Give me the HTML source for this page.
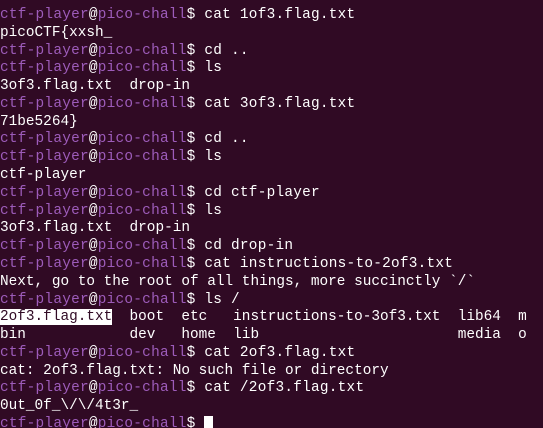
<!DOCTYPE html>
<html><head><style>
html,body{margin:0;padding:0;background:#300a24;width:543px;height:428px;overflow:hidden}
pre{margin:0;padding:7px 0 0 0;font-family:"Liberation Mono",monospace;font-size:14.4px;line-height:17.78px;color:#ffffff;white-space:pre}
.l{letter-spacing:0.25px}
.p{color:#9d5cba}
.h{background:#ffffff;color:#300a24}
.c{background:#ffffff}
</style></head><body><pre><span class="l"><span class="p">ctf-player</span>@<span class="p">pico-chall</span>$ cat 1of3.flag.txt</span>
picoCTF{xxsh_
<span class="l"><span class="p">ctf-player</span>@<span class="p">pico-chall</span>$ cd ..</span>
<span class="l"><span class="p">ctf-player</span>@<span class="p">pico-chall</span>$ ls</span>
3of3.flag.txt  drop-in
<span class="l"><span class="p">ctf-player</span>@<span class="p">pico-chall</span>$ cat 3of3.flag.txt</span>
71be5264}
<span class="l"><span class="p">ctf-player</span>@<span class="p">pico-chall</span>$ cd ..</span>
<span class="l"><span class="p">ctf-player</span>@<span class="p">pico-chall</span>$ ls</span>
ctf-player
<span class="l"><span class="p">ctf-player</span>@<span class="p">pico-chall</span>$ cd ctf-player</span>
<span class="l"><span class="p">ctf-player</span>@<span class="p">pico-chall</span>$ ls</span>
3of3.flag.txt  drop-in
<span class="l"><span class="p">ctf-player</span>@<span class="p">pico-chall</span>$ cd drop-in</span>
<span class="l"><span class="p">ctf-player</span>@<span class="p">pico-chall</span>$ cat instructions-to-2of3.txt</span>
Next, go to the root of all things, more succinctly `/`
<span class="l"><span class="p">ctf-player</span>@<span class="p">pico-chall</span>$ ls /</span>
<span class="h">2of3.flag.txt</span>  boot  etc   instructions-to-3of3.txt  lib64  m
bin            dev   home  lib                       media  o
<span class="l"><span class="p">ctf-player</span>@<span class="p">pico-chall</span>$ cat 2of3.flag.txt</span>
cat: 2of3.flag.txt: No such file or directory
<span class="l"><span class="p">ctf-player</span>@<span class="p">pico-chall</span>$ cat /2of3.flag.txt</span>
0ut_0f_\/\/4t3r_
<span class="l"><span class="p">ctf-player</span>@<span class="p">pico-chall</span>$ <span class="c"> </span></span></pre></body></html>
